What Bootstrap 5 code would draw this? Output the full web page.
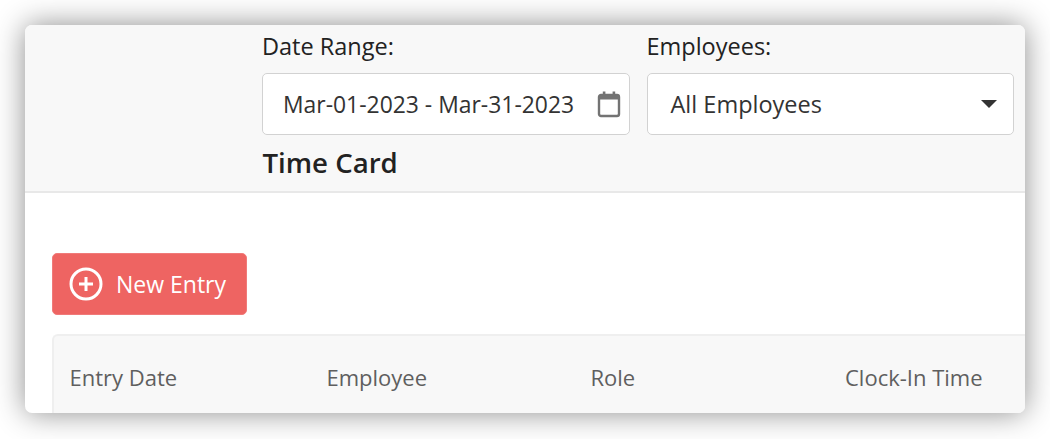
<!DOCTYPE html>
<html lang="en">
<head>
<meta charset="utf-8">
<title>Time Card</title>
<link href="https://cdn.jsdelivr.net/npm/bootstrap@5.3.0/dist/css/bootstrap.min.css" rel="stylesheet">
<style>
html,body{height:439px;overflow:hidden;background:#fff}
body{padding:25px;font-family:"Open Sans","Liberation Sans",sans-serif}
.win{height:388px;width:1000px;background:#fff;border-radius:7px;overflow:hidden;box-shadow:0 0 30px rgba(0,0,0,.45)}
.head-zone{height:168px;background:#f8f8f8;border-bottom:2px solid #e8e8e8;padding:7px 11px 0 237px}
.fields{gap:17px}
.fld{width:367.5px}
.fld-label{font-size:23.5px;line-height:28px;color:#222;margin:0 0 13px}
.fld-box{height:62px;background:#fff;border:1.5px solid #d2d2d2;border-radius:5px;color:#333}
.fld-text{padding-top:2px}
.fld-date{padding:0 8px 0 20px;font-size:22.9px}
.fld-sel{padding:0 16px 0 23px;font-size:23.5px}
.caret-sh{width:0;height:0;border-left:8px solid transparent;border-right:8px solid transparent;border-top:8px solid #333}
.page-ttl{font-size:27.6px;line-height:34px;font-weight:600;color:#222;margin:10px 0 0 .5px}
.body-zone{padding:60px 0 0 27px}
.add-btn{width:194.5px;height:62px;background:#ee6462;border:1px solid #f07a79;border-radius:5px;color:#fff;font-size:23px;gap:13px;padding:0 0 0 16px}
.add-btn:hover{background:#ee6462;color:#fff}
.tbl-head{margin-top:19px;height:100px;background:#f8f8f8;border:2px solid #efefef;border-right:0;border-radius:6px 0 0 0;color:#5f5f5f;font-size:22px;padding-top:24px}
.tbl-head span{display:block;line-height:34px}
.c1{width:256px;padding-left:15.5px}
.c2{width:264px;padding-left:16.5px}
.c3{width:255px;padding-left:16.5px}
.c4{width:196px;padding-left:16px;white-space:nowrap}
</style>
</head>
<body>
<div class="win">
  <div class="head-zone">
    <div class="d-flex fields">
      <div class="fld">
        <p class="fld-label">Date Range:</p>
        <div class="fld-box fld-date d-flex align-items-center justify-content-between">
          <span class="fld-text">Mar-01-2023 - Mar-31-2023</span>
          <svg width="24" height="28" viewBox="0 0 24 28" aria-hidden="true"><path d="M4 5h16a2 2 0 0 1 2 2v17a2 2 0 0 1-2 2H4a2 2 0 0 1-2-2V7a2 2 0 0 1 2-2z" fill="none" stroke="#737373" stroke-width="2.4"/><path d="M2 5.5h20V9.5H2z" fill="#737373"/><path d="M5.8 1.5h2.6v4H5.8zM15.6 1.5h2.6v4h-2.6z" fill="#737373"/></svg>
        </div>
      </div>
      <div class="fld">
        <p class="fld-label">Employees:</p>
        <div class="fld-box fld-sel d-flex align-items-center justify-content-between">
          <span class="fld-text">All Employees</span>
          <span class="caret-sh"></span>
        </div>
      </div>
    </div>
    <h1 class="page-ttl">Time Card</h1>
  </div>
  <div class="body-zone">
    <button type="button" class="btn add-btn d-flex align-items-center">
      <svg width="34" height="34" viewBox="0 0 34 34" aria-hidden="true"><circle cx="17" cy="17" r="15" fill="none" stroke="#fff" stroke-width="3"/><path d="M17 10v14M10 17h14" stroke="#fff" stroke-width="3" fill="none"/></svg>
      <span>New Entry</span>
    </button>
    <div class="tbl-head d-flex">
      <span class="c1">Entry Date</span>
      <span class="c2">Employee</span>
      <span class="c3">Role</span>
      <span class="c4">Clock-In Time</span>
    </div>
  </div>
</div>
<script src="https://cdn.jsdelivr.net/npm/bootstrap@5.3.0/dist/js/bootstrap.bundle.min.js"></script>
</body>
</html>
